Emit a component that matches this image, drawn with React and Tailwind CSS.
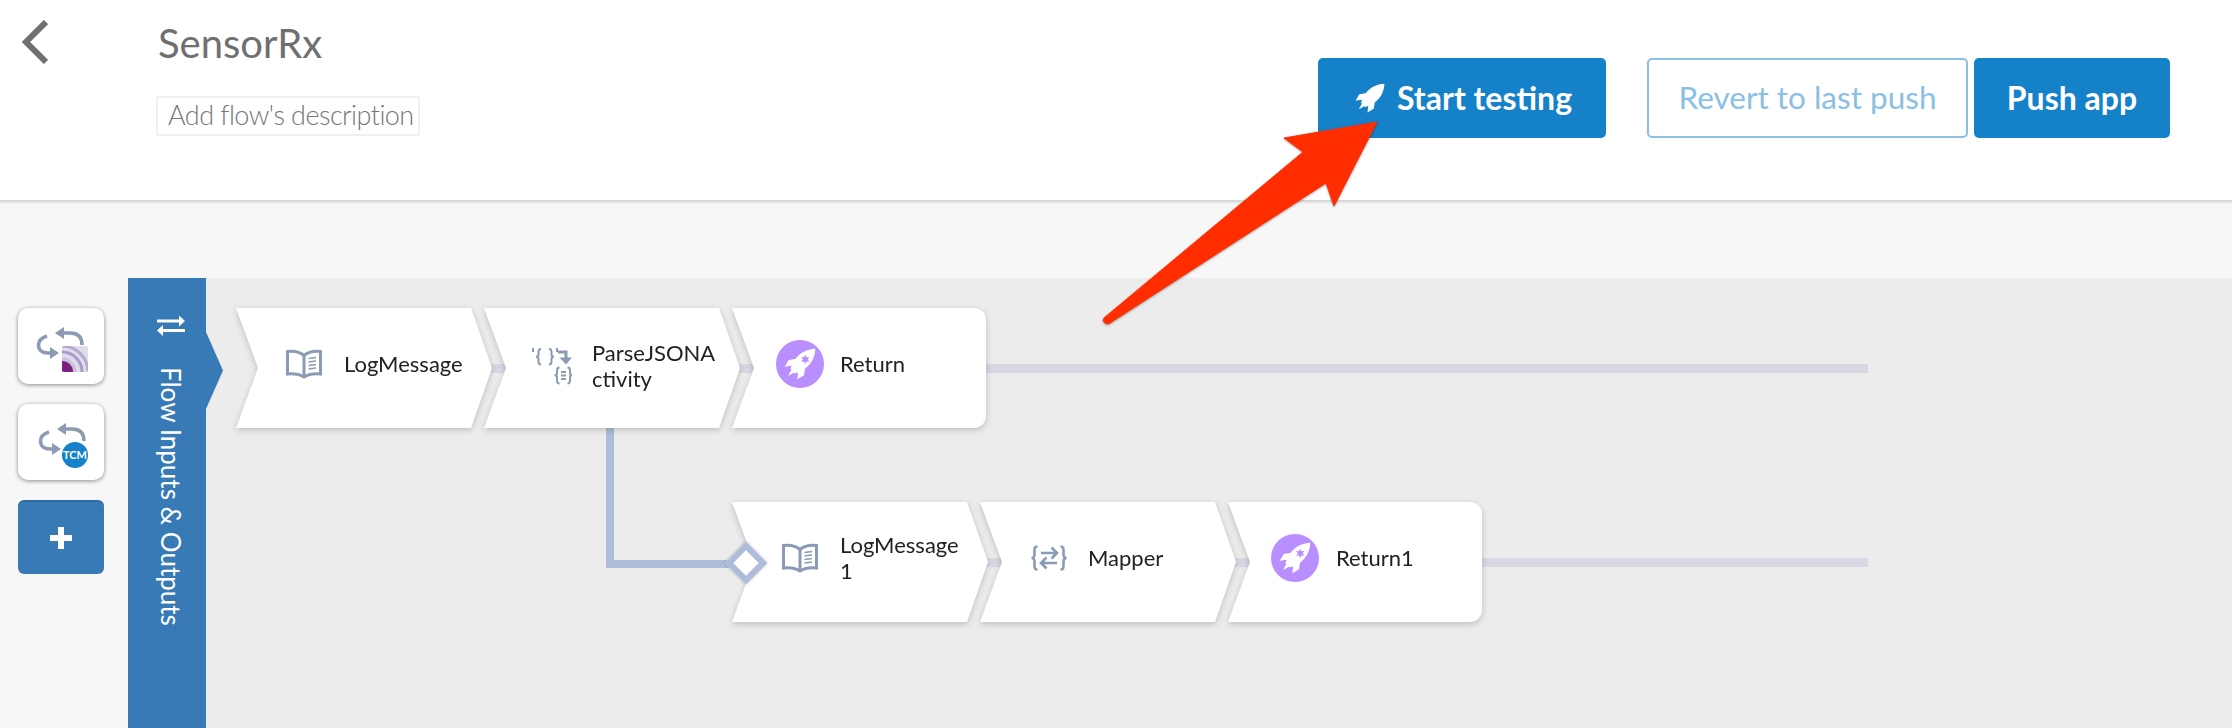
const slate = '#8a9bb3'

function Rocket({ className, star }) {
    return (
        <svg viewBox="0 0 24 24" className={className} fill="currentColor">
            <path d="M23.500 0.500C17 0.800 12.200 3.500 8.500 8.200L3.500 9L0.500 14L5.800 13.400L4.800 15.500L5.500 16.500L3 21L7.500 18.500L8.500 19.200L10.600 18.200L10 23.500L15 20.500L15.800 15.500C20.500 11.800 23.200 7 23.500 0.500Z" />
            {star && <path d="M16 5l.8 2 2.200-.3-1.200 1.900 1.200 1.800-2.200-.3-.8 2-1-2-2.100.3 1.200-1.800-1.200-1.900 2.100.3z" fill="#b98eff" />}
        </svg>
    )
}

function Book() {
    return (
        <svg viewBox="0 0 36 30" className="w-[36px] h-[30px]" fill="none" stroke={slate}>
            <path strokeWidth="3" d="M1.500 2.500C8 1.800 14 3 18 6.500C22 3 28 1.800 34.500 2.500V25C28 24.300 22 25.500 18 28C14 25.500 8 24.300 1.500 25Z" />
            <path strokeWidth="3" d="M18 6.500V28" />
            <path strokeWidth="1.600" d="M22.500 9.500L30 8.500M22.500 13L30 12M22.500 16.500L30 15.500M22.500 20L30 19" />
        </svg>
    )
}

function ParseIcon() {
    return (
        <svg viewBox="0 0 40 38" className="w-[40px] h-[38px]" fill="none" stroke={slate} strokeWidth="2">
            <path d="M1 1V5M25 1V5" />
            <path d="M9 2C7 2 6.500 3 6.500 5V7.500C6.500 9 5.500 9.800 4 9.800C5.500 9.800 6.500 10.500 6.500 12V14.500C6.500 16.500 7 17.500 9 17.500" />
            <path d="M17 2C19 2 19.500 3 19.500 5V7.500C19.500 9 20.500 9.800 22 9.800C20.500 9.800 19.500 10.500 19.500 12V14.500C19.500 16.500 19 17.500 17 17.500" />
            <path strokeWidth="3" d="M26 5H34V13" />
            <path fill={slate} stroke="none" d="M27.500 10.500H40L34 17.500Z" />
            <path d="M27.500 20.500C25.500 20.500 25 21.500 25 23.500V26C25 27.500 24 28.300 22.500 28.300C24 28.300 25 29 25 30.500V33.500C25 35.500 25.500 36.500 27.500 36.500" />
            <path d="M35.500 20.500C37.500 20.500 38 21.500 38 23.500V26C38 27.500 39 28.300 40 28.300C39 28.300 38 29 38 30.500V33.500C38 35.500 37.500 36.500 35.500 36.500" />
            <path d="M29 25H34M29 28.500H34M29 32H34" />
        </svg>
    )
}

function MapperIcon() {
    return (
        <svg viewBox="0 0 36 26" className="w-[36px] h-[26px]" fill="none" stroke={slate} strokeWidth="2.600">
            <path d="M6.500 1.500C3.500 1.500 3.500 3 3.500 6V9.500C3.500 11.500 2.500 13 0.500 13C2.500 13 3.500 14.500 3.500 16.500V20C3.500 23 3.500 24.500 6.500 24.500" />
            <path d="M29.500 1.500C32.500 1.500 32.500 3 32.500 6V9.500C32.500 11.500 33.500 13 35.500 13C33.500 13 32.500 14.500 32.500 16.500V20C32.500 23 32.500 24.500 29.500 24.500" />
            <path d="M10 8H26M20.500 2.500L26 8L20.500 13.500" />
            <path d="M26 18H10M15.500 12.500L10 18L15.500 23.500" />
        </svg>
    )
}

function ReturnIcon() {
    return (
        <div className="w-[48px] h-[48px] rounded-full bg-[#b98eff] flex items-center justify-center text-white">
            <Rocket className="w-[32px] h-[32px]" star />
        </div>
    )
}

function SyncArrows() {
    return (
        <>
            <path d="M44 25H52C59 25 64 28 64 37" fill="none" stroke={slate} strokeWidth="3.500" />
            <path d="M37 25L46 19V31Z" fill={slate} />
            <path d="M29 28C23 30 20.500 33 20.500 37C20.500 42 24 45 30 45H33" fill="none" stroke={slate} strokeWidth="3.500" />
            <path d="M41 45L32 39V51Z" fill={slate} />
        </>
    )
}

function Tile({ icon, pad, last, first, lift = 'pb-[8px]', children }) {
    return (
        <div className={`relative drop-shadow-[0_2px_3px_rgba(0,0,0,0.2)] ${first ? '' : '-ml-[8px]'}`}>
            <div className={`flex items-center h-[120px] bg-white text-[#222] text-[22px] leading-[26px] ${lift} ${last
                ? 'w-[254px] rounded-r-[12px] [clip-path:polygon(0_0,100%_0,100%_100%,0_100%,22px_50%)]'
                : 'w-[256px] [clip-path:polygon(0_0,235px_0,100%_50%,235px_100%,0_100%,22px_50%)]'}`}>
                <div className={`w-[108px] shrink-0 ${pad}`}>{icon}</div>
                <div>{children}</div>
            </div>
        </div>
    )
}

export default function App() {
    return (
        <div className="relative w-[2232px] h-[728px] overflow-hidden bg-[#f7f7f7] font-['Lato','Noto_Sans',sans-serif]">
            {/* Header */}
            <header className="flex h-[202px] bg-white border-b-2 border-[#d9d9d9] shadow-[0_1px_2px_rgba(0,0,0,0.08)] pl-[22px] pr-[62px]">
                <svg viewBox="0 0 26 44" className="w-[26px] h-[44px] mt-[20px]" fill="none" stroke="#707070" strokeWidth="6">
                    <path d="M24 2L4 22L24 42" />
                </svg>
                <div className="ml-[108px]">
                    <h1 className="pl-[2px] pt-[19px] text-[40px] leading-[48px] text-[#6f6f6f] font-normal">SensorRx</h1>
                    <div className="mt-[29px] w-[264px] h-[40px] border-2 border-[#f0f0f0] pl-[10px] text-[27px] tracking-[-0.55px] leading-[34px] font-light text-[#777] whitespace-nowrap">
                        Add flow's description
                    </div>
                </div>
                <div className="ml-auto mt-[58px] flex h-[80px] text-[32px]">
                    <button className="w-[288px] pl-[3px] rounded-[5px] bg-[#1581c9] text-white font-bold flex items-center justify-center gap-[12px]">
                        <Rocket className="w-[30px] h-[30px]" />
                        Start testing
                    </button>
                    <button className="ml-[41px] w-[321px] rounded-[5px] border-2 border-[#8ac0e4] text-[31.500px] text-[#8ac0e4] font-normal">
                        Revert to last push
                    </button>
                    <button className="ml-[6px] w-[196px] rounded-[5px] bg-[#1581c9] text-white font-bold">
                        Push app
                    </button>
                </div>
            </header>

            <main className="flex h-[526px] pt-[76px]">
                {/* Trigger buttons */}
                <div className="w-[128px] shrink-0 pl-[18px] pt-[30px] flex flex-col gap-[20px]">
                    <div className="w-[86px] h-[76px] rounded-[10px] bg-white shadow-[0_1px_4px_rgba(0,0,0,0.45)]">
                        <svg viewBox="0 0 86 76" className="w-[86px] h-[76px]">
                            <SyncArrows />
                            <defs>
                                <clipPath id="rss"><rect x="44" y="38" width="26" height="26" rx="2" /></clipPath>
                            </defs>
                            <g clipPath="url(#rss)">
                                <rect x="44" y="38" width="26" height="26" fill="#e2dbec" />
                                <circle cx="44" cy="64" r="26" fill="none" stroke="#b3a8cf" strokeWidth="3" />
                                <circle cx="44" cy="64" r="20" fill="none" stroke="#a99cc9" strokeWidth="3" />
                                <circle cx="44" cy="64" r="14.500" fill="#c9bfdd" />
                                <circle cx="44" cy="64" r="11" fill="#7d1f82" />
                            </g>
                        </svg>
                    </div>
                    <div className="w-[86px] h-[76px] rounded-[10px] bg-white shadow-[0_1px_4px_rgba(0,0,0,0.45)]">
                        <svg viewBox="0 0 86 76" className="w-[86px] h-[76px]">
                            <g transform="translate(2 0)"><SyncArrows /></g>
                            <circle cx="57" cy="51" r="13" fill="#1581c9" />
                            <text x="57" y="55" textAnchor="middle" fontSize="11" fontWeight="700" fill="#fff">TCM</text>
                        </svg>
                    </div>
                    <div className="w-[86px] h-[74px] rounded-[6px] bg-[#387ab5] border-t-2 border-[#2f6ca3] flex items-center justify-center">
                        <svg viewBox="0 0 22 22" className="w-[22px] h-[22px]" fill="#fff">
                            <path d="M8 0H14V8H22V14H14V22H8V14H0V8H8Z" />
                        </svg>
                    </div>
                </div>

                {/* Flow inputs bar */}
                <div className="relative z-10 w-[78px] shrink-0 bg-[#387ab5] flex flex-col items-center pt-[38px] pl-[7px] text-white">
                    <svg viewBox="0 0 28 20" className="w-[28px] h-[20px]" fill="#fff">
                        <path d="M0 4H22V0L28 5.500L22 11V7H0Z" transform="translate(0 -0.500)" />
                        <path d="M28 13H6V9L0 14.500L6 20V16H28Z" />
                    </svg>
                    <div className="mt-[31px] [writing-mode:vertical-rl] text-[26px] leading-[34px] whitespace-nowrap">
                        Flow Inputs &amp; Outputs
                    </div>
                    <div className="absolute left-full top-[54px] w-[17px] h-[77px] bg-[#387ab5] [clip-path:polygon(0_0,100%_50%,0_100%)]" />
                </div>

                {/* Canvas */}
                <div className="relative flex-1 bg-[#ececec] pt-[30px]">
                    <div className="absolute left-[400px] top-[150px] w-[130px] h-[140px] border-l-8 border-b-8 border-[#aebcd9]" />

                    <div className="relative flex ml-[30px] w-[1632px] h-[120px]">
                        <div className="absolute left-[24px] right-0 top-[56px] h-[9px] bg-[#d8d8e4]" />
                        <Tile first pad="pl-[50px]" icon={<Book />}>LogMessage</Tile>
                        <Tile pad="pl-[48px]" lift="pb-[4px]" icon={<ParseIcon />}>ParseJSONA<br />ctivity</Tile>
                        <Tile last pad="pl-[44px]" icon={<ReturnIcon />}>Return</Tile>
                    </div>

                    <div className="relative flex ml-[526px] mt-[74px] w-[1136px] h-[120px]">
                        <div className="absolute left-[24px] right-0 top-[56px] h-[9px] bg-[#d8d8e4]" />
                        <Tile first pad="pl-[50px]" icon={<Book />}>LogMessage<br />1</Tile>
                        <Tile pad="pl-[51px]" icon={<MapperIcon />}>Mapper</Tile>
                        <Tile last pad="pl-[43px]" icon={<ReturnIcon />}>Return1</Tile>
                        {/* Branch marker */}
                        <div className="absolute -left-[1px] top-[46px] w-[30px] h-[30px] rotate-45 bg-white border-[6px] border-[#aebcd9] shadow-[0_0_3px_rgba(0,0,0,0.3)]" />
                    </div>
                </div>
            </main>

            {/* Annotation arrow */}
            <svg viewBox="1080 110 310 230" className="absolute left-[1080px] top-[110px] w-[310px] h-[230px] drop-shadow-[0_1px_1px_rgba(0,0,0,0.35)]">
                <path fill="#ff2d00" stroke="#ff2d00" strokeWidth="1" strokeLinejoin="round" d="M1377 122L1284 138L1303 152L1104 318Q1102 321 1105 323Q1107 325 1110 323L1326 183L1334 206Z" />
            </svg>
        </div>
    )
}
